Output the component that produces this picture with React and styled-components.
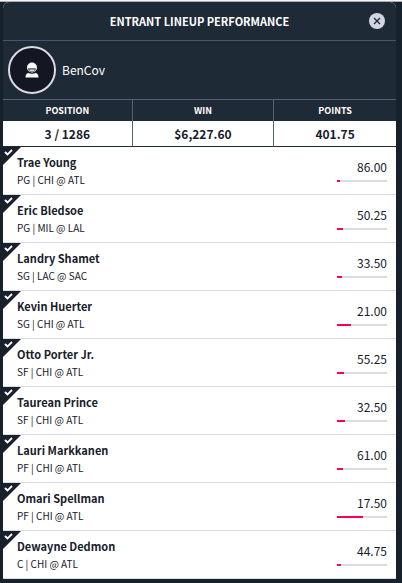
import styled, { createGlobalStyle } from "styled-components";

const GlobalStyle = createGlobalStyle`
    * {
        box-sizing: border-box;
    }
    body {
        margin: 0;
        background-color: #16212b;
        color: #16202b;
        font-family: "Noto Sans CJK SC", sans-serif;
    }
`;
const Page = styled.div`
    border-top: 1px solid #f4f5f6;
    padding: 0 6px 4px 3px;
    box-shadow: inset 0 1px 0 #a9afb5;
`;
const Card = styled.main`
    margin-top: 1px;
    background-color: #ffffff;
    border-radius: 6px 6px 0 0;
    overflow: hidden;
`;
const Header = styled.header`
    display: grid;
    grid-template-columns: 38px 1fr 38px;
    align-items: center;
    justify-items: center;
    height: 39px;
    background-color: #1f2a37;
    border-bottom: 1px solid #46566f;
`;
const Title = styled.h1`
    grid-column: 2;
    margin: 0;
    color: #ffffff;
    font-size: 11px;
    line-height: 18px;
    white-space: nowrap;
`;
const CloseBtn = styled.button`
    display: flex;
    padding: 0;
    border: none;
    background: none;
    cursor: pointer;
`;
const User = styled.section`
    display: flex;
    align-items: center;
    gap: 6px;
    height: 58px;
    padding-left: 5px;
    background-color: #1f2a37;
    color: #ffffff;
    font-size: 12px;
    line-height: 18px;
`;
const Avatar = styled.div`
    display: flex;
    align-items: center;
    justify-content: center;
    width: 48px;
    height: 48px;
    border: 2px solid #d9dce6;
    border-radius: 50%;
    background-color: #141723;
`;
const Stats = styled.table`
    width: 100%;
    table-layout: fixed;
    border-collapse: separate;
    border-spacing: 0;
    text-align: center;

    th,
    td {
        padding: 0;
        border-right: 1px solid #566174;
    }
    th:last-child,
    td:last-child {
        border-right: none;
    }
    th {
        height: 22px;
        border-top: 1px solid #566174;
        background-color: #1f2a37;
        color: #ffffff;
        font-size: 9px;
        line-height: 14px;
    }
    td {
        height: 26px;
        border-bottom: 1px solid #1f2a37;
        font-size: 12px;
        font-weight: bold;
        line-height: 18px;
    }
`;
const StatHead = styled.th`
    width: ${(props) => props.$width};
`;
const Lineup = styled.ul`
    margin: 0;
    padding: 0;
    list-style: none;
`;
const Player = styled.li`
    position: relative;
    display: flex;
    align-items: center;
    justify-content: space-between;
    height: 48px;
    padding: 0 9px 0 14px;
    border-bottom: 1px solid #d9dce8;
`;
const Corner = styled.svg`
    position: absolute;
    top: 0;
    left: 0;
`;
const Name = styled.div`
    font-size: 11px;
    font-weight: bold;
    line-height: 18px;
`;
const Match = styled.div`
    font-size: 10px;
    line-height: 18px;
`;
const Score = styled.div`
    width: 50px;
    padding-bottom: 2px;
    font-size: 12px;
    line-height: 18px;
    text-align: right;
`;
const Track = styled.div`
    height: 2px;
    margin-top: 4px;
    background-color: #d9dce8;
`;
const Fill = styled.div`
    height: 2px;
    background-color: #ff0055;
`;

const players = [
    { name: "Trae Young", match: "PG | CHI @ ATL", points: "86.00", owned: 6 },
    { name: "Eric Bledsoe", match: "PG | MIL @ LAL", points: "50.25", owned: 12 },
    { name: "Landry Shamet", match: "SG | LAC @ SAC", points: "33.50", owned: 10 },
    { name: "Kevin Huerter", match: "SG | CHI @ ATL", points: "21.00", owned: 27 },
    { name: "Otto Porter Jr.", match: "SF | CHI @ ATL", points: "55.25", owned: 14 },
    { name: "Taurean Prince", match: "SF | CHI @ ATL", points: "32.50", owned: 15 },
    { name: "Lauri Markkanen", match: "PF | CHI @ ATL", points: "61.00", owned: 12 },
    { name: "Omari Spellman", match: "PF | CHI @ ATL", points: "17.50", owned: 51 },
    { name: "Dewayne Dedmon", match: "C | CHI @ ATL", points: "44.75", owned: 7 },
];

const App = () => {
    return (
        <Page>
            <GlobalStyle />
            <Card>
                <Header>
                    <Title>ENTRANT LINEUP PERFORMANCE</Title>
                    <CloseBtn type="button" aria-label="Close">
                        <svg width="16" height="16" viewBox="0 0 16 16">
                            <circle cx="8" cy="8" r="8" fill="#d3d5e2" />
                            <path
                                d="M5 5l6 6M11 5l-6 6"
                                stroke="#1f2a37"
                                strokeWidth="1.4"
                            />
                        </svg>
                    </CloseBtn>
                </Header>
                <User>
                    <Avatar>
                        <svg width="14" height="16" viewBox="0 0 14 16">
                            <circle cx="7" cy="5.5" r="5" fill="#ffffff" />
                            <path
                                d="M3 6.2h8c0 2.400-1.600 3.700-4 3.700s-4-1.300-4-3.700z"
                                fill="#4a4d59"
                            />
                            <path
                                d="M4 7.500h6c-.4 1.200-1.500 1.900-3 1.900s-2.600-.7-3-1.900z"
                                fill="#d9dbe2"
                            />
                            <path
                                d="M.5 15.500c0-2.600 1-4 2.700-4.500 2.300 1 5.300 1 7.600 0 1.700.5 2.700 1.900 2.700 4.500z"
                                fill="#ffffff"
                            />
                        </svg>
                    </Avatar>
                    BenCov
                </User>
                <Stats>
                    <thead>
                        <tr>
                            <StatHead $width="33%">POSITION</StatHead>
                            <StatHead $width="36%">WIN</StatHead>
                            <StatHead $width="31%">POINTS</StatHead>
                        </tr>
                    </thead>
                    <tbody>
                        <tr>
                            <td>3 / 1286</td>
                            <td>$6,227.60</td>
                            <td>401.75</td>
                        </tr>
                    </tbody>
                </Stats>
                <Lineup>
                    {players.map((player) => (
                        <Player key={player.name}>
                            <Corner width="18" height="18" viewBox="0 0 18 18">
                                <path d="M0 0h18L0 18z" fill="#16212b" />
                                <path
                                    d="M2 5l2.500 2.500L9 3"
                                    fill="none"
                                    stroke="#ffffff"
                                    strokeWidth="1.8"
                                />
                            </Corner>
                            <div>
                                <Name>{player.name}</Name>
                                <Match>{player.match}</Match>
                            </div>
                            <Score>
                                {player.points}
                                <Track>
                                    <Fill style={{ width: `${player.owned}%` }} />
                                </Track>
                            </Score>
                        </Player>
                    ))}
                </Lineup>
            </Card>
        </Page>
    );
};

export default App;
